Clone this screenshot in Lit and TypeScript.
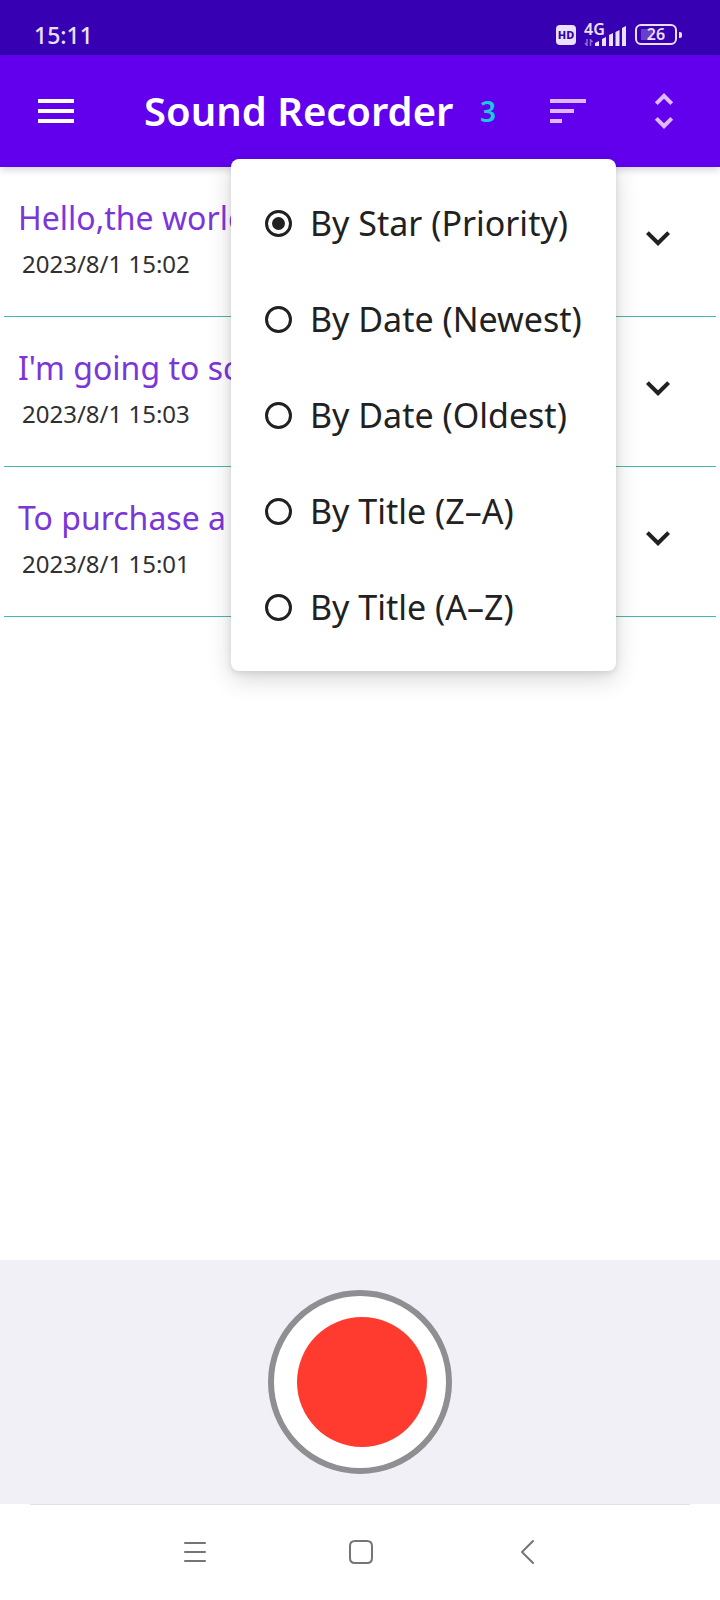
import { LitElement, html, css, svg } from "lit";
import { customElement, property, state } from "lit/decorators.js";

interface Recording {
  title: string;
  date: string;
}

const recordings: Recording[] = [
  { title: "Hello,the world", date: "2023/8/1 15:02" },
  { title: "I'm going to school", date: "2023/8/1 15:03" },
  { title: "To purchase a", date: "2023/8/1 15:01" },
];

const sortOptions = [
  "By Star (Priority)",
  "By Date (Newest)",
  "By Date (Oldest)",
  "By Title (Z–A)",
  "By Title (A–Z)",
];

const glyphs = {
  menu: svg`<path d="M3 18h18v-2H3v2zm0-5h18v-2H3v2zm0-7v2h18V6H3z"/>`,
  sort: svg`<path d="M3 18h6v-2H3v2zM3 6v2h18V6H3zm0 7h12v-2H3v2z"/>`,
  unfold: svg`<path d="M12 5.83L15.17 9l1.41-1.41L12 3 7.41 7.59 8.83 9 12 5.83zm0 12.34L8.83 15l-1.41 1.41L12 21l4.59-4.59L15.17 15 12 18.17z"/>`,
  expand: svg`<path d="M16.59 8.59L12 13.17 7.41 8.59 6 10l6 6 6-6z"/>`,
};

const icon = (name: keyof typeof glyphs) =>
  html`<svg width="48" height="48" viewBox="0 0 24 24" fill="currentColor" aria-hidden="true">${glyphs[name]}</svg>`;

const buttonReset = css`
  * {
    box-sizing: border-box;
  }
  button {
    display: grid;
    place-items: center;
    margin: 0;
    padding: 0;
    border: 0;
    background: none;
    color: inherit;
    font: inherit;
    cursor: pointer;
  }
  svg {
    display: block;
  }
`;

@customElement("status-bar")
export class StatusBar extends LitElement {
  static styles = css`
    :host {
      display: flex;
      align-items: center;
      justify-content: space-between;
      box-sizing: border-box;
      height: 55px;
      padding: 14px 38px 0 34px;
      background: #3700b3;
      color: #ebe0fa;
    }
    svg {
      display: block;
    }
    .time {
      font-size: 23px;
      line-height: 32px;
      font-weight: 500;
    }
    .icons {
      display: flex;
      align-items: center;
      gap: 8px;
    }
    .hd {
      width: 20px;
      height: 20px;
      border-radius: 4px;
      background: #ebe0fa;
      color: #3700b3;
      font-size: 11px;
      line-height: 20px;
      font-weight: 800;
      text-align: center;
    }
    .signal {
      position: relative;
    }
    .network {
      position: absolute;
      left: 0;
      top: 0;
      font-size: 16px;
      line-height: 12px;
      font-weight: 600;
    }
    .battery {
      display: flex;
      align-items: center;
      gap: 2px;
    }
    .cell {
      box-sizing: border-box;
      width: 42px;
      height: 21px;
      border: 2px solid #ebe0fa;
      border-radius: 6px;
      background: linear-gradient(#6a3fc8, #6a3fc8) 4px center / 11px 11px no-repeat;
      font-size: 16px;
      line-height: 17px;
      font-weight: 600;
      text-align: center;
    }
    .nub {
      width: 3px;
      height: 6px;
      border-radius: 0 2px 2px 0;
      background: #ebe0fa;
    }
  `;

  render() {
    return html`
      <span class="time">15:11</span>
      <div class="icons">
        <span class="hd">HD</span>
        <span class="signal">
          <svg width="43" height="24" viewBox="0 0 43 24" fill="currentColor" aria-hidden="true">
            <path d="M11 20l4-2v5h-4zM18 16l4-2v9h-4zM25 12l4-2v13h-4zM31.500 9l4-2v16h-4zM38 5l4-2v20h-4z"/>
            <path d="M3 16v7M3 22.500l-2-2.500M6.500 16v7M6.500 16.500l2 2.500" fill="none" stroke="#8e69d6" stroke-width="1.500"/>
          </svg>
          <span class="network">4G</span>
        </span>
        <span class="battery"><span class="cell">26</span><span class="nub"></span></span>
      </div>
    `;
  }
}

@customElement("sort-menu")
export class SortMenu extends LitElement {
  @state() private selected = 0;

  static styles = css`
    :host {
      display: block;
      padding: 16px 34px;
      border-radius: 8px;
      background: #fff;
      color: #212121;
      box-shadow: 0 8px 24px rgba(0, 0, 0, 0.16), 0 2px 6px rgba(0, 0, 0, 0.1);
    }
    .option {
      display: flex;
      align-items: center;
      gap: 18px;
      height: 96px;
      font-size: 34px;
      line-height: 44px;
      white-space: nowrap;
      cursor: pointer;
    }
    .radio {
      appearance: none;
      display: grid;
      place-items: center;
      flex: none;
      box-sizing: border-box;
      width: 27px;
      height: 27px;
      margin: 0;
      border: 3px solid #212121;
      border-radius: 50%;
    }
    .radio:checked::before {
      content: "";
      width: 13px;
      height: 13px;
      border-radius: 50%;
      background: #212121;
    }
  `;

  render() {
    return sortOptions.map(
      (label, i) => html`
        <label class="option">
          <input
            class="radio"
            type="radio"
            name="sort"
            .checked=${i === this.selected}
            @change=${() => (this.selected = i)}
          />
          <span>${label}</span>
        </label>
      `,
    );
  }
}

@customElement("app-bar")
export class AppBar extends LitElement {
  @property({ type: Number }) count = 0;
  @state() private open = true;

  static styles = [
    buttonReset,
    css`
      :host {
        position: relative;
        z-index: 1;
        display: flex;
        align-items: center;
        box-sizing: border-box;
        height: 112px;
        padding-right: 8px;
        background: #6200ee;
        color: #fff;
        box-shadow: 0 2px 8px rgba(0, 0, 0, 0.2);
      }
      .nav {
        width: 112px;
        height: 112px;
      }
      .title {
        flex: 1;
        margin: 0;
        padding-left: 32px;
        font-size: 40px;
        line-height: 56px;
        font-weight: 600;
        white-space: nowrap;
      }
      .count {
        width: 64px;
        color: #18cbdc;
        font-size: 28px;
        line-height: 40px;
        font-weight: 600;
        text-align: center;
      }
      .action {
        width: 96px;
        height: 96px;
        color: #e0b8ff;
      }
      .menu {
        position: absolute;
        top: 104px;
        right: 104px;
        width: 385px;
        box-sizing: border-box;
      }
    `,
  ];

  render() {
    return html`
      <button class="nav" aria-label="Open navigation">${icon("menu")}</button>
      <h1 class="title">Sound Recorder</h1>
      <span class="count">${this.count}</span>
      <button class="action" aria-label="Sort" @click=${() => (this.open = !this.open)}>${icon("sort")}</button>
      <button class="action" aria-label="Expand all">${icon("unfold")}</button>
      ${this.open ? html`<sort-menu class="menu"></sort-menu>` : ""}
    `;
  }
}

@customElement("recording-row")
export class RecordingRow extends LitElement {
  @property({ attribute: false }) recording!: Recording;

  static styles = [
    buttonReset,
    css`
      :host {
        display: flex;
        justify-content: space-between;
        box-sizing: border-box;
        height: 150px;
        margin: 0 4px;
        padding: 29px 10px 0 14px;
        border-bottom: 1px solid #45b8ac;
      }
      .title {
        margin: 0;
        color: #7b36d9;
        font-size: 32px;
        line-height: 44px;
        font-weight: 400;
      }
      .date {
        margin: 8px 0 0 4px;
        color: #303030;
        font-size: 24px;
        line-height: 32px;
      }
      .toggle {
        width: 96px;
        height: 84px;
        color: #212121;
      }
    `,
  ];

  render() {
    return html`
      <div>
        <h2 class="title">${this.recording.title}</h2>
        <p class="date">${this.recording.date}</p>
      </div>
      <button class="toggle" aria-label="Show details">${icon("expand")}</button>
    `;
  }
}

@customElement("app-root")
export class AppRoot extends LitElement {
  static styles = [
    buttonReset,
    css`
      :host {
        display: flex;
        flex-direction: column;
        min-height: 100vh;
        background: #fff;
        font-family: "Noto Sans", "Open Sans", sans-serif;
      }
      .list {
        flex: 1;
      }
      .recorder {
        display: flex;
        justify-content: center;
        padding: 30px 0;
        background: #f1f0f6;
      }
      .record {
        width: 184px;
        height: 184px;
        border: 6px solid #8e8e93;
        border-radius: 50%;
        background: #fff;
      }
      .dot {
        width: 130px;
        height: 130px;
        margin-left: 3px;
        border-radius: 50%;
        background: #ff3b30;
      }
      .system {
        display: flex;
        justify-content: center;
        margin: 0 30px;
        padding-left: 2px;
        border-top: 1px solid #e2e2e4;
        color: #757575;
      }
      .key {
        width: 166px;
        height: 95px;
        padding-bottom: 1px;
      }
    `,
  ];

  render() {
    const key = (label: string, d: string) => html`
      <button class="key" aria-label=${label}>
        <svg width="26" height="26" viewBox="0 0 26 26" fill="none" stroke="currentColor" stroke-width="2" stroke-linecap="round" stroke-linejoin="round" aria-hidden="true">
          <path d=${d} />
        </svg>
      </button>
    `;
    return html`
      <status-bar></status-bar>
      <app-bar .count=${recordings.length}></app-bar>
      <main class="list">
        ${recordings.map((r) => html`<recording-row .recording=${r}></recording-row>`)}
      </main>
      <section class="recorder">
        <button class="record" aria-label="Record"><span class="dot"></span></button>
      </section>
      <nav class="system">
        ${key("Recent apps", "M3 4h20M3 13h20M3 22h20")}
        ${key("Home", "M7 2h12q5 0 5 5v12q0 5-5 5H7q-5 0-5-5V7q0-5 5-5z")}
        ${key("Back", "M19 2L8 13l11 11")}
      </nav>
    `;
  }
}
